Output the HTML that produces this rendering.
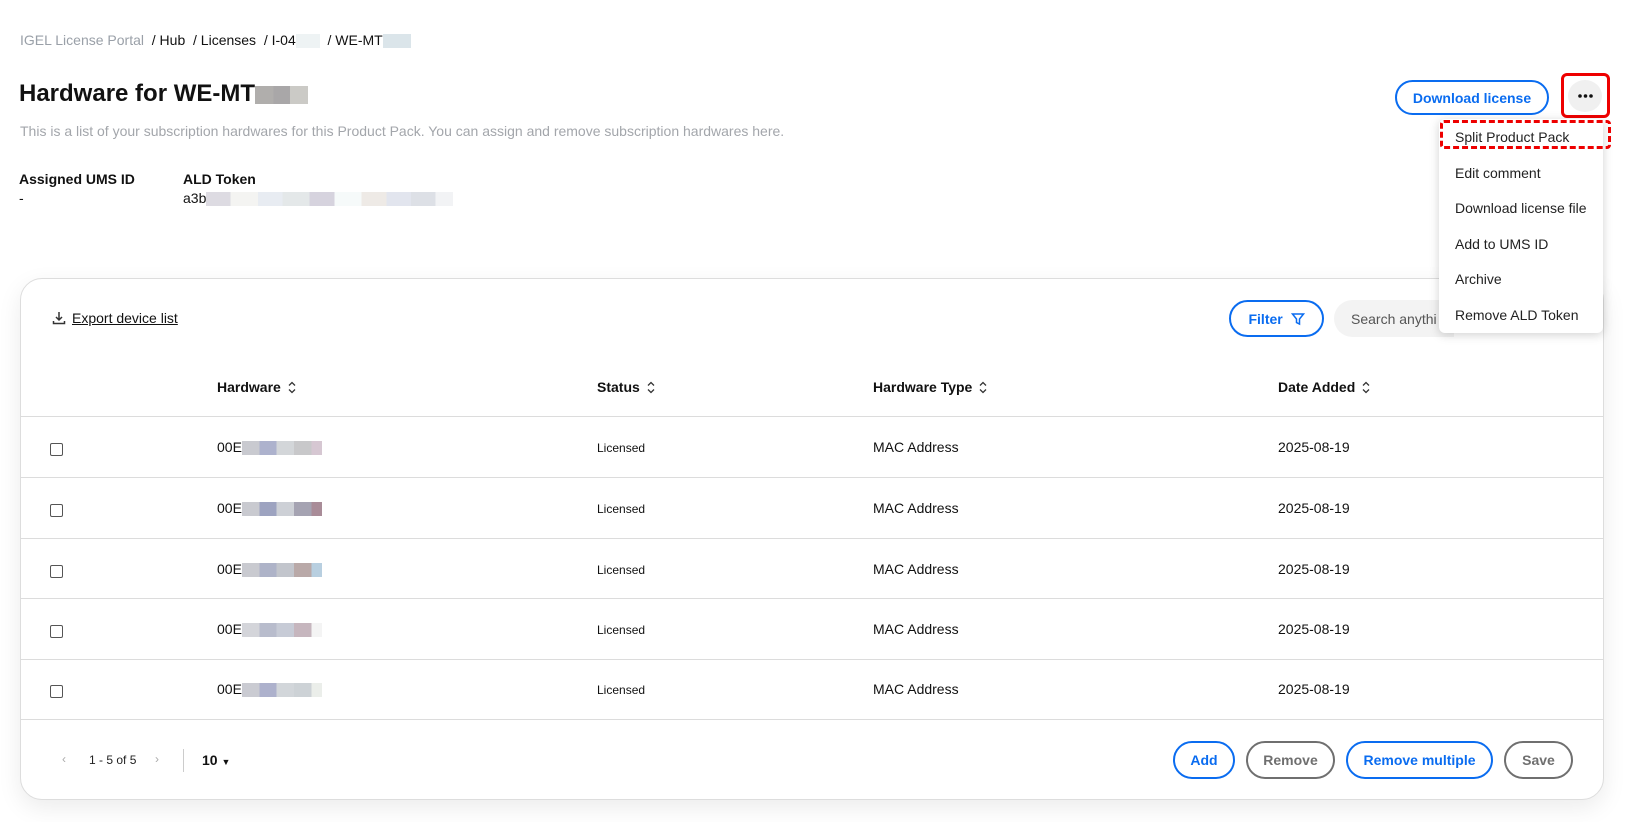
<!DOCTYPE html>
<html><head><meta charset="utf-8"><style>
*{box-sizing:border-box;margin:0;padding:0}
body{width:1628px;height:822px;background:#fff;font-family:"Liberation Sans",Arial,sans-serif;color:#111;position:relative;overflow:hidden}
.a{position:absolute;white-space:nowrap}
.blur{display:inline-block;height:14px;vertical-align:middle}
.btn{position:absolute;border:2px solid #0a6cf0;border-radius:20px;color:#0a6cf0;font-weight:bold;font-size:14px;display:flex;align-items:center;justify-content:center;background:#fff}
.gbtn{border-color:#6f6f6f;color:#6f6f6f}
.th{font-weight:bold;font-size:14px;top:379px}
.th svg{margin-left:7px;vertical-align:-2px}
.line{position:absolute;left:20px;width:1584px;height:1px;background:#dcdcdc}
.cb{position:absolute;left:50px;width:13px;height:13px;border:1.5px solid #555;border-radius:2px}
.cell{position:absolute;font-size:14px}
.mi{position:absolute;left:1455px;font-size:14px;color:#222}
</style></head><body>
<div class="a" style="left:20px;top:32px;font-size:14px;color:#111"><span style="color:#9aa0a8">IGEL License Portal</span>&nbsp; / Hub &nbsp;/ Licenses &nbsp;/ I-04<span class="blur" style="width:24px;background:#eef3f4"></span>&nbsp; / WE-MT<span class="blur" style="width:28px;background:#dbe5ea"></span></div>
<div class="a" style="left:19px;top:80px;font-size:24px;font-weight:bold">Hardware for WE-MT<span class="blur" style="width:53px;height:18px;background:linear-gradient(90deg,#b0aeac 0 35%,#a9a7a8 35% 66%,#cbcac6 66%)"></span></div>
<div class="a" style="left:20px;top:123px;font-size:14px;color:#a3a6ab">This is a list of your subscription hardwares for this Product Pack. You can assign and remove subscription hardwares here.</div>
<div class="a" style="left:19px;top:171px;font-size:14px;font-weight:bold">Assigned UMS ID</div>
<div class="a" style="left:19px;top:190px;font-size:14px">-</div>
<div class="a" style="left:183px;top:171px;font-size:14px;font-weight:bold">ALD Token</div>
<div class="a" style="left:183px;top:190px;font-size:14px">a3b<span class="blur" style="width:247px;background:linear-gradient(90deg,#dddbe2 0 10%,#f4f4f2 10% 21%,#e8ecf2 21% 31%,#e4e8e9 31% 42%,#d6d3de 42% 52%,#f6fafa 52% 63%,#eeeae6 63% 73%,#e2e5ee 73% 83%,#dde0e6 83% 93%,#f2f3f5 93%)"></span></div>

<div class="btn" style="left:1395px;top:80px;width:154px;height:35px">Download license</div>
<div class="a" style="left:1561px;top:73px;width:49px;height:45px;border:3px solid #e00;border-radius:6px"></div>
<div class="a" style="left:1568px;top:80px;width:34px;height:32px;border-radius:50%;background:#f0f0f0"></div>
<svg class="a" style="left:1578px;top:94px" width="15" height="4" viewBox="0 0 15 4" fill="#111"><circle cx="2" cy="2" r="1.8"/><circle cx="7.5" cy="2" r="1.8"/><circle cx="13" cy="2" r="1.8"/></svg>

<div class="a" style="left:20px;top:278px;width:1584px;height:522px;border:1px solid #ddd;border-radius:22px;box-shadow:0 8px 24px rgba(0,0,0,.08);background:#fff"></div>
<svg class="a" style="left:52px;top:311px" width="14" height="14" viewBox="0 0 14 14" fill="none" stroke="#333" stroke-width="1.5"><path d="M7 1v8M4 6l3 3 3-3M1.5 10v2.5h11V10"/></svg>
<div class="a" style="left:72px;top:310px;font-size:14px;text-decoration:underline">Export device list</div>
<div class="btn" style="left:1229px;top:300px;width:95px;height:37px">Filter&nbsp;&nbsp;<svg width="14" height="14" viewBox="0 0 14 14" fill="none" stroke="#0a6cf0" stroke-width="1.5"><path d="M1.5 2h11L8.5 7v5L5.5 10.5V7z"/></svg></div>
<div class="a" style="left:1334px;top:300px;width:120px;height:37px;background:#f3f3f3;border-radius:19px 0 0 19px;font-size:14px;color:#555;padding:11px 0 0 17px">Search anythi</div>

<div class="a th" style="left:217px">Hardware<svg width="8" height="13" viewBox="0 0 8 13" fill="none" stroke="#333" stroke-width="1.3"><path d="M1 4.5l3-3 3 3M1 8.5l3 3 3-3"/></svg></div>
<div class="a th" style="left:597px">Status<svg width="8" height="13" viewBox="0 0 8 13" fill="none" stroke="#333" stroke-width="1.3"><path d="M1 4.5l3-3 3 3M1 8.5l3 3 3-3"/></svg></div>
<div class="a th" style="left:873px">Hardware Type<svg width="8" height="13" viewBox="0 0 8 13" fill="none" stroke="#333" stroke-width="1.3"><path d="M1 4.5l3-3 3 3M1 8.5l3 3 3-3"/></svg></div>
<div class="a th" style="left:1278px">Date Added<svg width="8" height="13" viewBox="0 0 8 13" fill="none" stroke="#333" stroke-width="1.3"><path d="M1 4.5l3-3 3 3M1 8.5l3 3 3-3"/></svg></div>
<div class="line" style="top:416px"></div>
<div class="line" style="top:477px"></div>
<div class="line" style="top:538px"></div>
<div class="line" style="top:598px"></div>
<div class="line" style="top:659px"></div>
<div class="line" style="top:719px"></div>

<div class="cb" style="top:443px"></div><div class="cell" style="left:217px;top:439px">00E<span class="blur" style="width:80px;background:linear-gradient(90deg,#c9cad0 0 22%,#adb2cd 22% 43%,#d3d6d9 43% 65%,#c8c8ca 65% 87%,#d6c7d2 87%)"></span></div>
<div class="cell" style="left:597px;top:441px;font-size:12px">Licensed</div><div class="cell" style="left:873px;top:439px">MAC Address</div><div class="cell" style="left:1278px;top:439px">2025-08-19</div>

<div class="cb" style="top:504px"></div><div class="cell" style="left:217px;top:500px">00E<span class="blur" style="width:80px;background:linear-gradient(90deg,#c9cad0 0 22%,#9da3c0 22% 43%,#cdd0d6 43% 65%,#a5a3b2 65% 87%,#a98c98 87%)"></span></div>
<div class="cell" style="left:597px;top:502px;font-size:12px">Licensed</div><div class="cell" style="left:873px;top:500px">MAC Address</div><div class="cell" style="left:1278px;top:500px">2025-08-19</div>

<div class="cb" style="top:565px"></div><div class="cell" style="left:217px;top:561px">00E<span class="blur" style="width:80px;background:linear-gradient(90deg,#c9cad0 0 22%,#aeb3c8 22% 43%,#c2c5cc 43% 65%,#b9a9a8 65% 87%,#b8cfe0 87%)"></span></div>
<div class="cell" style="left:597px;top:563px;font-size:12px">Licensed</div><div class="cell" style="left:873px;top:561px">MAC Address</div><div class="cell" style="left:1278px;top:561px">2025-08-19</div>

<div class="cb" style="top:625px"></div><div class="cell" style="left:217px;top:621px">00E<span class="blur" style="width:80px;background:linear-gradient(90deg,#d4d5da 0 22%,#b8bccc 22% 43%,#c7cbd6 43% 65%,#c6b6be 65% 87%,#f4f4f4 87%)"></span></div>
<div class="cell" style="left:597px;top:623px;font-size:12px">Licensed</div><div class="cell" style="left:873px;top:621px">MAC Address</div><div class="cell" style="left:1278px;top:621px">2025-08-19</div>

<div class="cb" style="top:685px"></div><div class="cell" style="left:217px;top:681px">00E<span class="blur" style="width:80px;background:linear-gradient(90deg,#cacbd2 0 22%,#adb1cc 22% 43%,#d2d6da 43% 65%,#cdd2d6 65% 87%,#ebeeea 87%)"></span></div>
<div class="cell" style="left:597px;top:683px;font-size:12px">Licensed</div><div class="cell" style="left:873px;top:681px">MAC Address</div><div class="cell" style="left:1278px;top:681px">2025-08-19</div>

<div class="a" style="left:62px;top:752px;font-size:12px;color:#aaa">‹</div>
<div class="a" style="left:89px;top:753px;font-size:12px;color:#222">1 - 5 of 5</div>
<div class="a" style="left:155px;top:752px;font-size:12px;color:#aaa">›</div>
<div class="a" style="left:183px;top:749px;width:1px;height:23px;background:#ccc"></div>
<div class="a" style="left:202px;top:752px;font-size:14px;font-weight:bold">10 <span style="font-size:9px">▼</span></div>

<div class="btn" style="left:1173px;top:741px;width:62px;height:38px">Add</div>
<div class="btn gbtn" style="left:1246px;top:741px;width:89px;height:38px">Remove</div>
<div class="btn" style="left:1346px;top:741px;width:147px;height:38px">Remove multiple</div>
<div class="btn gbtn" style="left:1504px;top:741px;width:69px;height:38px">Save</div>

<div class="a" style="left:1439px;top:119px;width:164px;height:214px;background:#fff;border-radius:6px;box-shadow:0 2px 10px rgba(0,0,0,.18)"></div>
<div class="a" style="left:1440px;top:120px;width:171px;height:29px;border:3px dashed #e00;border-radius:4px"></div>
<div class="mi" style="top:129px">Split Product Pack</div>
<div class="mi" style="top:165px">Edit comment</div>
<div class="mi" style="top:200px">Download license file</div>
<div class="mi" style="top:236px">Add to UMS ID</div>
<div class="mi" style="top:271px">Archive</div>
<div class="mi" style="top:307px">Remove ALD Token</div>
</body></html>
